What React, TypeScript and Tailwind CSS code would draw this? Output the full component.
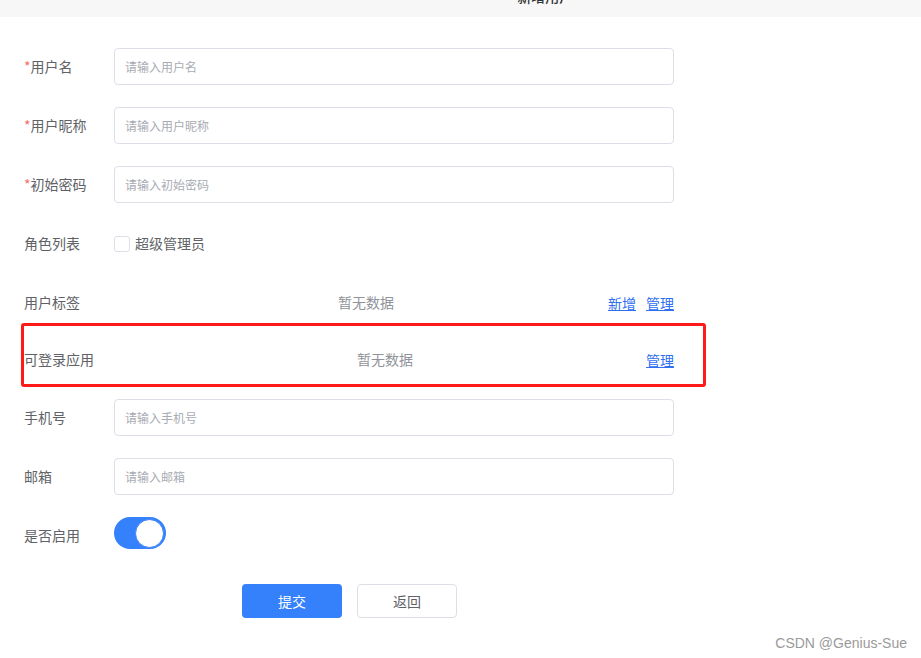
import { useState } from "react";

const font = { fontFamily: '"Noto Sans CJK SC", "Noto Sans", sans-serif' };

function InputRow({ label, placeholder, required }: { label: string; placeholder: string; required?: boolean }) {
    return (
        <div className="flex items-center h-[37px] mb-[22px]">
            <div className="w-[90px] text-[14px] text-[#606266]">
                {required && <span className="text-[#f56c6c]">*</span>}
                {label}
            </div>
            <div className="w-[560px] h-[37px] border border-[#dcdfe6] rounded-[4px] flex items-center px-[10px]">
                <span className="text-[12px] text-[#a8abb2]">{placeholder}</span>
            </div>
        </div>
    );
}

export default function App() {
    const [enabled, setEnabled] = useState(true);

    return (
        <div className="relative w-[921px] h-[658px] bg-white overflow-hidden" style={font}>
            {/* Header, scrolled mostly out of view */}
            <div className="h-[17px] bg-[#f7f7f7] flex overflow-hidden">
                <span className="-mt-[13px] text-[14px] leading-[16px] text-[#303133] pl-0">‹</span>
                <span className="-mt-[12px] ml-[513px] text-[14px] leading-[16px] text-[#303133] font-medium">新增用户</span>
            </div>

            <div className="pl-[24px] pt-[31px]">
                <InputRow label="用户名" placeholder="请输入用户名" required />
                <InputRow label="用户昵称" placeholder="请输入用户昵称" required />
                <InputRow label="初始密码" placeholder="请输入初始密码" required />

                {/* Role list */}
                <div className="flex items-center h-[37px] mb-[22px]">
                    <div className="w-[90px] text-[14px] text-[#606266]">角色列表</div>
                    <label className="flex items-center gap-[5px] cursor-pointer">
                        <span className="w-[16px] h-[16px] border border-[#dcdfe6] rounded-[3px] bg-white"></span>
                        <span className="text-[14px] text-[#606266]">超级管理员</span>
                    </label>
                </div>

                {/* User tags */}
                <div className="flex items-center h-[37px] w-[650px] mb-[2px]">
                    <div className="w-[56px] text-[14px] text-[#606266]">用户标签</div>
                    <div className="ml-[258px] text-[14px] text-[#909399]">暂无数据</div>
                    <div className="ml-auto flex gap-[10px] text-[14px] text-[#2f6ff0] underline mt-[2px]">
                        <a>新增</a>
                        <a>管理</a>
                    </div>
                </div>

                {/* Apps, highlighted */}
                <div className="-ml-[3px] w-[685px] h-[64px] border-[3px] border-[#ff1a1a] rounded-[3px] pt-[15px] mb-[12px]">
                    <div className="flex items-center h-[37px] w-[650px]">
                        <div className="w-[70px] text-[14px] text-[#606266]">可登录应用</div>
                        <div className="ml-[263px] text-[14px] text-[#909399]">暂无数据</div>
                        <div className="ml-auto text-[14px] text-[#2f6ff0] underline mt-[2px]">
                            <a>管理</a>
                        </div>
                    </div>
                </div>

                <InputRow label="手机号" placeholder="请输入手机号" />
                <InputRow label="邮箱" placeholder="请输入邮箱" />

                {/* Enabled switch */}
                <div className="flex items-center h-[37px] mb-[30px]">
                    <div className="w-[90px] text-[14px] text-[#606266]">是否启用</div>
                    <button
                        onClick={() => setEnabled(!enabled)}
                        className={`-mt-[5px] w-[52px] h-[32px] rounded-full flex items-center p-[2px] ${enabled ? "bg-[#3580fb] justify-end" : "bg-[#dcdfe6] justify-start"}`}
                    >
                        <span className="w-[29px] h-[29px] rounded-full bg-white border border-[#3580fb]"></span>
                    </button>
                </div>

                {/* Actions */}
                <div className="flex gap-[15px] pl-[218px]">
                    <button className="w-[100px] h-[34px] rounded-[4px] bg-[#3580fb] text-white text-[14px]">提交</button>
                    <button className="w-[100px] h-[34px] rounded-[4px] border border-[#dcdfe6] bg-white text-[#606266] text-[14px]">返回</button>
                </div>
            </div>

            {/* Watermark */}
            <div
                className="absolute right-[14px] top-[633px] text-[14px] text-[#9a9a9a]"
                style={{ fontFamily: '"Liberation Sans", Arial, sans-serif' }}
            >
                CSDN @Genius-Sue
            </div>
        </div>
    );
}
